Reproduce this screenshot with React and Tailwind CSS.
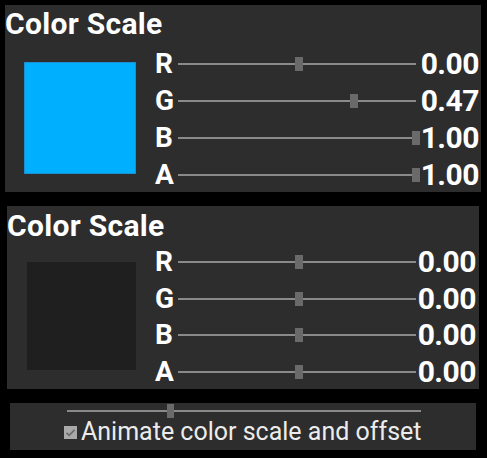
const font = { fontFamily: "Roboto, 'Liberation Sans', sans-serif" };

const top = [
  { label: "R", value: 0, text: "0.00" },
  { label: "G", value: 0.47, text: "0.47" },
  { label: "B", value: 1, text: "1.00" },
  { label: "A", value: 1, text: "1.00" },
];

const bottom = [
  { label: "R", value: 0, text: "0.00" },
  { label: "G", value: 0, text: "0.00" },
  { label: "B", value: 0, text: "0.00" },
  { label: "A", value: 0, text: "0.00" },
];

function Row({ row, rowH }) {
  return (
    <div className={`flex items-center ${rowH}`}>
      <span className="w-[23px] text-[28px] leading-none font-bold text-white">
        {row.label}
      </span>
      <div className="relative h-[14px] w-[238px]">
        <div className="absolute top-[6px] left-0 h-[2px] w-full bg-[#8a8a8a]" />
        <div
          className="absolute top-0 h-[14px] w-[8px] bg-[#6a6a6a]"
          style={{ left: `${(row.value + 1) * 117}px` }}
        />
      </div>
      <span className="flex-1 text-right text-[30px] leading-none font-bold tracking-[-0.5px] text-white">
        {row.text}
      </span>
    </div>
  );
}

function ColorPanel({ swatch, rows, className, swatchClass, rowsClass, rowH }) {
  return (
    <section className={`bg-[#2d2d2d] ${className}`}>
      <h2 className="text-[30px] leading-[30px] font-bold tracking-[0.3px] text-white">
        Color Scale
      </h2>
      <div className="flex items-start">
        <div className={swatchClass}>
          <div className={`h-full w-full ${swatch}`} />
        </div>
        <div className={`flex flex-1 flex-col ${rowsClass}`}>
          {rows.map((r) => (
            <Row key={r.label} row={r} rowH={rowH} />
          ))}
        </div>
      </div>
    </section>
  );
}

export default function App() {
  return (
    <div
      className="flex h-[458px] w-[487px] flex-col overflow-hidden bg-black"
      style={font}
    >
      <ColorPanel
        className="mt-[5px] ml-[5px] h-[187px] w-[476px] pt-[4px] pr-[2px]"
        swatch="bg-[#00b0ff] border border-[#1a8fd0]"
        swatchClass="mt-[23px] mr-[19px] ml-[19px] h-[112px] w-[112px]"
        rowsClass="pt-[6px]"
        rows={top}
        rowH="h-[37px]"
      />
      <ColorPanel
        className="mt-[14px] ml-[7px] h-[183px] w-[472px] pt-[5px] pr-[3px]"
        swatch="bg-[#1f1f1f]"
        swatchClass="mt-[21px] mr-[19px] ml-[20px] h-[108px] w-[109px]"
        rowsClass="pt-[3px]"
        rows={bottom}
        rowH="h-[36.5px]"
      />
      <section className="mt-[14px] ml-[10px] flex h-[47px] w-[466px] flex-col bg-[#2d2d2d]">
        <div className="relative mt-[1px] ml-[57px] h-[14px] w-[354px]">
          <div className="absolute top-[6px] left-0 h-[2px] w-full bg-[#8a8a8a]" />
          <div className="absolute top-0 left-[100px] h-[14px] w-[7px] bg-[#6a6a6a]" />
        </div>
        <label className="mt-[1px] ml-[54px] flex items-center gap-[4px]">
          <svg className="mt-[2px]" width="13" height="13" viewBox="0 0 13 13">
            <rect width="13" height="13" fill="#a9a9a9" />
            <path
              d="M2.5 6.8 L5.2 9.3 L10.5 3.8"
              fill="none"
              stroke="#6d6d6d"
              strokeWidth="1.8"
            />
          </svg>
          <span className="text-[25px] leading-none text-[#ececec]">
            Animate color scale and offset
          </span>
        </label>
      </section>
    </div>
  );
}
